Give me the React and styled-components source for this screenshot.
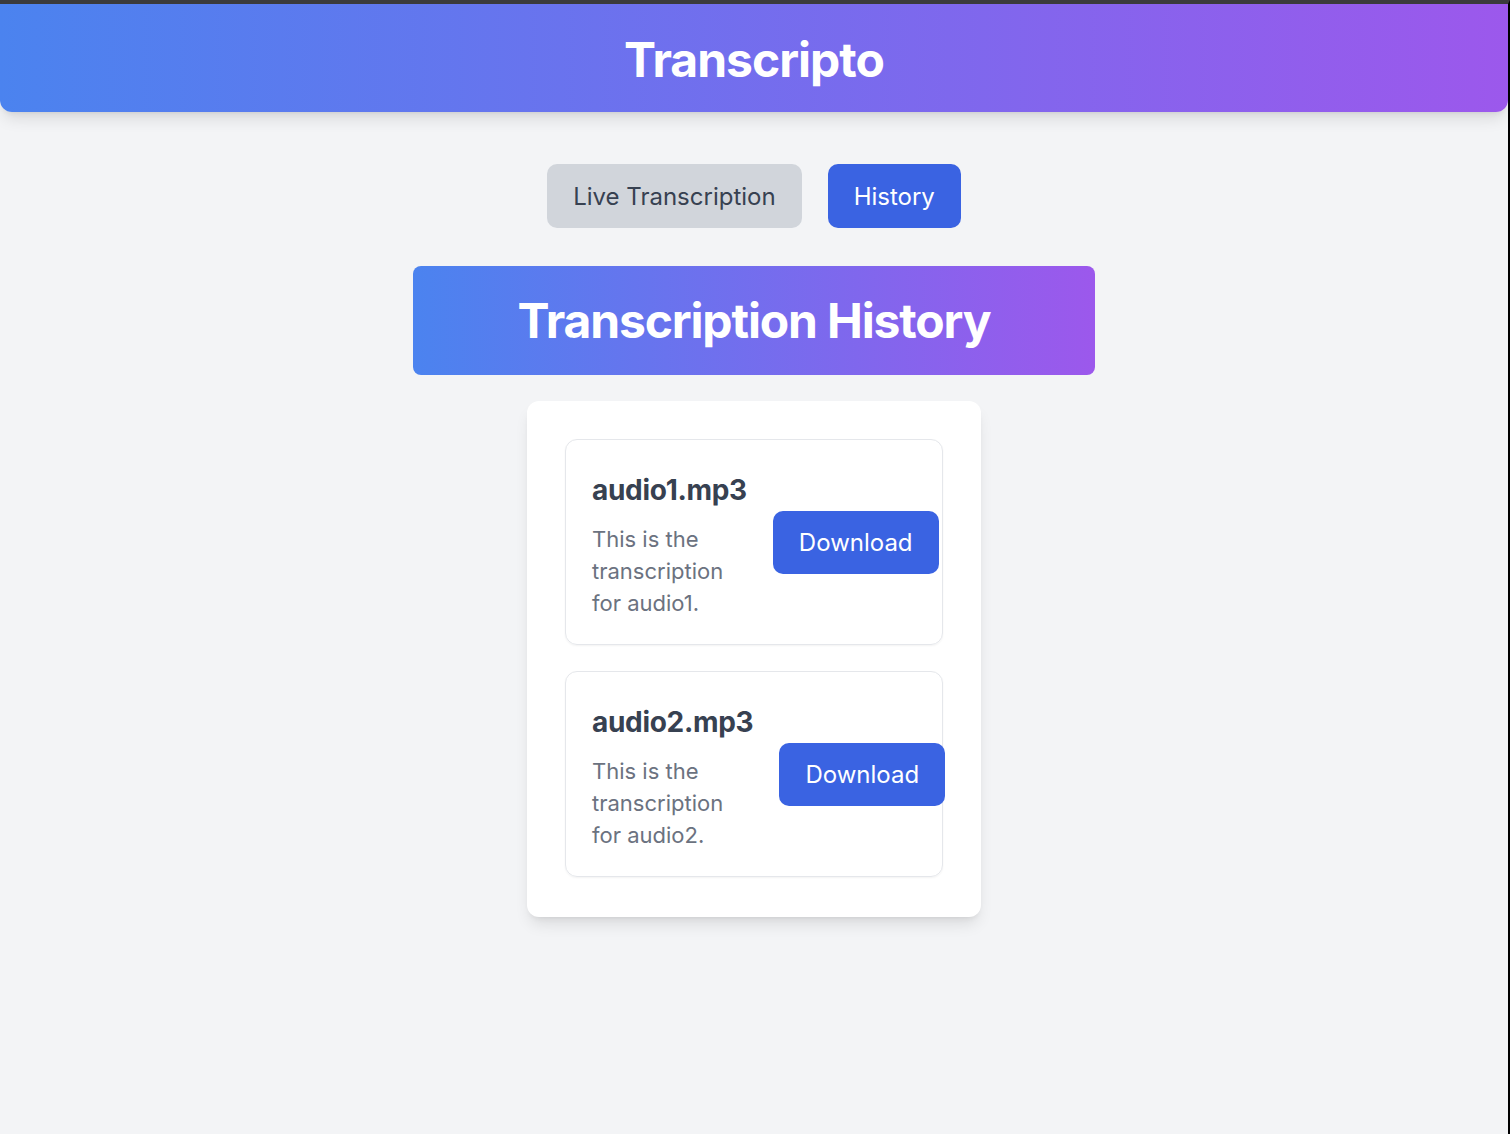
import React from 'react';
import styled, { createGlobalStyle } from 'styled-components';

const blueGradient = 'linear-gradient(90deg, #4b83ef 0%, #9c58ec 100%)';

const GlobalStyle = createGlobalStyle`
  * { box-sizing: border-box; }
  html, body {
    margin: 0;
    padding: 0;
    background: #f3f4f6;
    font-family: Inter, "Noto Sans", "Liberation Sans", sans-serif;
  }
`;

const Page = styled.div`
  min-height: 100vh;
  border-top: 4px solid #3b3b3c;
  border-right: 2px solid #000;
  display: flex;
  flex-direction: column;
  align-items: center;
`;

const Header = styled.header`
  align-self: stretch;
  background: ${blueGradient};
  border-radius: 0 0 12px 12px;
  box-shadow: 0 10px 15px -3px rgba(0,0,0,0.1), 0 4px 6px -4px rgba(0,0,0,0.1);
  padding: 26px 0 22px;
  text-align: center;
`;

const Logo = styled.h1`
  margin: 0;
  color: #fff;
  font-size: 48px;
  line-height: 60px;
  font-weight: 700;
  letter-spacing: -1px;
`;

const Tabs = styled.nav`
  display: flex;
  gap: 26px;
  margin-top: 52px;
`;

const Tab = styled.button`
  border: none;
  border-radius: 10px;
  height: 64px;
  padding: 0 26px;
  font-family: inherit;
  font-size: 24px;
  cursor: pointer;
  background: ${({ $active }) => ($active ? '#3a63e2' : '#d1d5db')};
  color: ${({ $active }) => ($active ? '#fff' : '#374151')};
`;

const Banner = styled.div`
  margin-top: 38px;
  width: 682px;
  height: 109px;
  border-radius: 8px;
  background: ${blueGradient};
  display: flex;
  align-items: center;
  justify-content: center;
`;

const BannerTitle = styled.h2`
  margin: 0;
  color: #fff;
  font-size: 48px;
  font-weight: 700;
  letter-spacing: -1.15px;
`;

const Panel = styled.section`
  margin-top: 26px;
  width: 454px;
  background: #fff;
  border-radius: 12px;
  padding: 38px 38px 40px;
  box-shadow: 0 10px 15px -3px rgba(0,0,0,0.1), 0 4px 6px -4px rgba(0,0,0,0.1);
  display: flex;
  flex-direction: column;
  gap: 26px;
`;

const Item = styled.article`
  height: 206px;
  border: 1px solid #e5e7eb;
  border-radius: 12px;
  padding: 0 26px;
  box-shadow: 0 1px 2px rgba(0,0,0,0.05);
  display: flex;
  align-items: center;
  justify-content: space-between;
  gap: 26px;
`;

const ItemText = styled.div`
  display: flex;
  flex-direction: column;
  padding-top: 8px;
`;

const FileName = styled.h3`
  margin: 0 0 16px;
  font-size: 28px;
  line-height: 34px;
  font-weight: 700;
  letter-spacing: -0.3px;
  color: #374151;
`;

const Transcript = styled.p`
  margin: 0;
  font-size: 22px;
  line-height: 32px;
  color: #6b7280;
`;

const DownloadButton = styled.button`
  flex-shrink: 0;
  border: none;
  border-radius: 10px;
  height: 63px;
  padding: 0 26px;
  background: #3a63e2;
  color: #fff;
  font-family: inherit;
  font-size: 24px;
  cursor: pointer;
`;

const history = [
  { file: 'audio1.mp3', text: 'This is the transcription for audio1.' },
  { file: 'audio2.mp3', text: 'This is the transcription for audio2.' },
];

export default function App() {
  return (
    <>
      <GlobalStyle />
      <Page>
        <Header>
          <Logo>Transcripto</Logo>
        </Header>
        <Tabs>
          <Tab>Live Transcription</Tab>
          <Tab $active>History</Tab>
        </Tabs>
        <Banner>
          <BannerTitle>Transcription History</BannerTitle>
        </Banner>
        <Panel>
          {history.map((h) => (
            <Item key={h.file}>
              <ItemText>
                <FileName>{h.file}</FileName>
                <Transcript>{h.text}</Transcript>
              </ItemText>
              <DownloadButton>Download</DownloadButton>
            </Item>
          ))}
        </Panel>
      </Page>
    </>
  );
}
